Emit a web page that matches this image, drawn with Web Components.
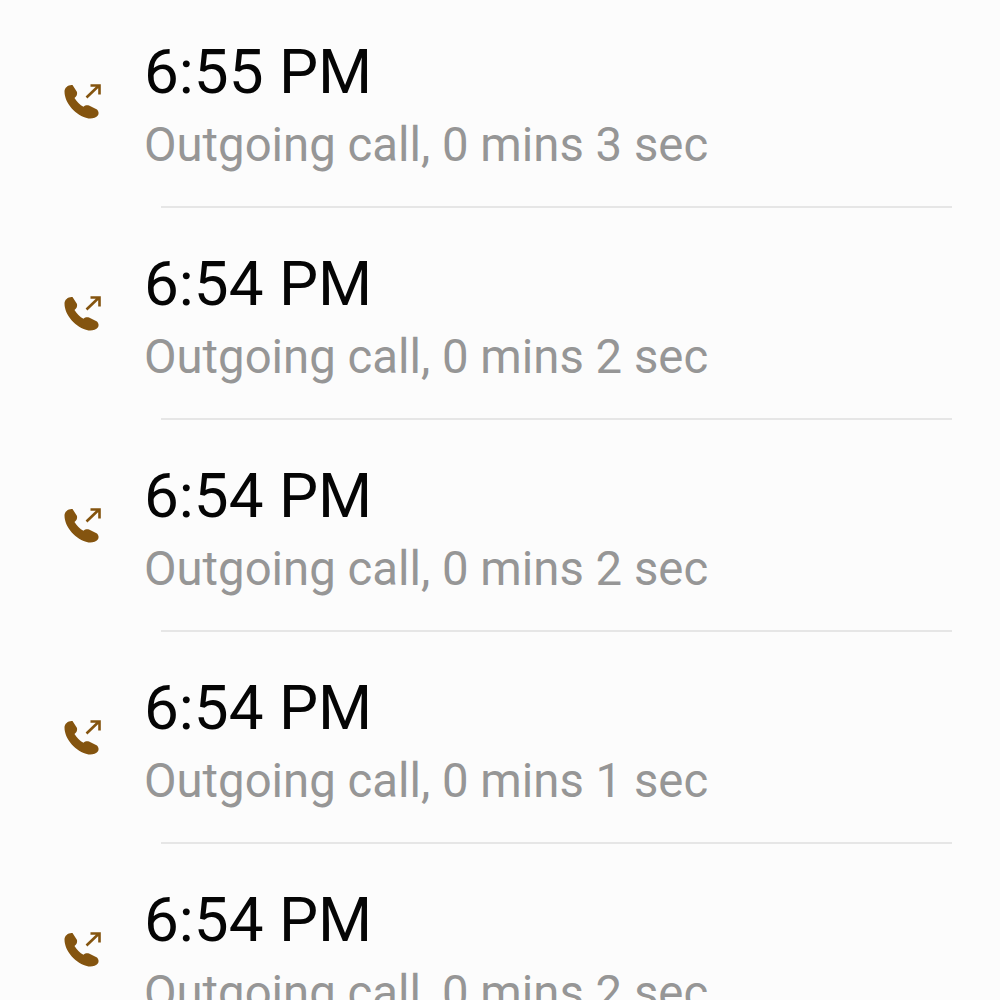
<!DOCTYPE html>
<html>
<head>
<meta charset="utf-8">
<title>Call log</title>
<style>
  html, body { margin: 0; height: 1000px; overflow: hidden; background: #fcfcfc; }
</style>
</head>
<body>
<call-list>
  <call-row time="6:55 PM" detail="Outgoing call, 0 mins 3 sec"></call-row>
  <call-row time="6:54 PM" detail="Outgoing call, 0 mins 2 sec"></call-row>
  <call-row time="6:54 PM" detail="Outgoing call, 0 mins 2 sec"></call-row>
  <call-row time="6:54 PM" detail="Outgoing call, 0 mins 1 sec"></call-row>
  <call-row time="6:54 PM" detail="Outgoing call, 0 mins 2 sec"></call-row>
</call-list>
<script>
const listTpl = document.createElement('template');
listTpl.innerHTML = `
<style>
  :host { display: block; margin-top: -4px; font-family: Roboto, sans-serif; }
</style>
<slot></slot>`;

class CallList extends HTMLElement {
  constructor() {
    super();
    this.attachShadow({ mode: 'open' });
    this.shadowRoot.appendChild(listTpl.content.cloneNode(true));
  }
}
customElements.define('call-list', CallList);

const rowTpl = document.createElement('template');
rowTpl.innerHTML = `
<style>
  :host { display: block; height: 212px; box-sizing: border-box; }
  .row { display: flex; align-items: center; height: 210px; padding-left: 62px; box-sizing: border-box; }
  svg { width: 40px; height: 40px; flex: none; margin-right: 42px; margin-top: 2px; }
  .text { padding-top: 7px; }
  .time { font-size: 62px; line-height: 72px; color: #050505; }
  .detail { font-size: 47.3px; line-height: 56px; color: #969696; margin-top: 9px; white-space: nowrap; }
  .line { height: 2px; margin: 0 48px 0 161px; background: #e6e6e6; }
</style>
<div class="row">
  <svg viewBox="0 0 40 40" aria-hidden="true">
    <path fill="#84540f" d="M2.500 9.500C2.500 5.500 6.500 2.500 10.500 3L15 10C15.500 12.500 14.500 14.500 12.500 16C14.500 19.500 18 23 21.500 24.800C23 23.300 25 23 27 23.500L35 27.500C36.800 29.300 37 31.500 36 33.300C34 36 30 37 26.500 36.500C13.500 33.500 2.500 21 2.500 9.500Z"/>
    <path fill="none" stroke="#84540f" stroke-width="2.600" d="M24.500 15.500 36.500 4M28.500 3.500h9v9"/>
  </svg>
  <div class="text">
    <div class="time"></div>
    <div class="detail"></div>
  </div>
</div>
<div class="line"></div>`;

class CallRow extends HTMLElement {
  constructor() {
    super();
    this.attachShadow({ mode: 'open' });
    this.shadowRoot.appendChild(rowTpl.content.cloneNode(true));
    this.shadowRoot.querySelector('.time').textContent = this.getAttribute('time');
    this.shadowRoot.querySelector('.detail').textContent = this.getAttribute('detail');
  }
}
customElements.define('call-row', CallRow);
</script>
</body>
</html>
